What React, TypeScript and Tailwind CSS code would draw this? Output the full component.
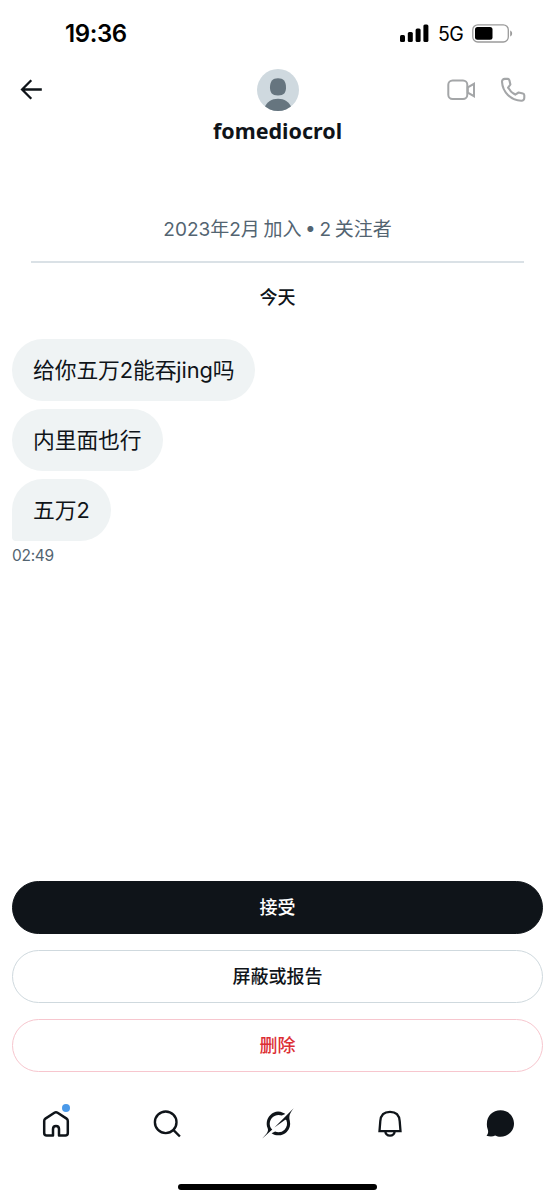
import type { ReactNode } from "react";

const messages = ["给你五万2能吞jing吗", "内里面也行", "五万2"];

function StatusBar() {
  return (
    <div className="flex h-[66px] items-center justify-between pl-[65px] pr-[42px]">
      <span className="pt-[2px] font-['Inter'] text-[24px] leading-[30px] font-semibold tracking-[-0.4px] text-black">19:36</span>
      <div className="flex items-center">
        <svg className="h-[19px] w-[29px]" viewBox="0 0 29 19" fill="#000">
          <rect x="0" y="11" width="5" height="7" rx="1.5" />
          <rect x="7.8" y="8" width="5" height="10" rx="1.5" />
          <rect x="15.6" y="4.5" width="5" height="13.5" rx="1.5" />
          <rect x="23.4" y="0.5" width="5" height="17.5" rx="1.5" />
        </svg>
        <span className="ml-[9px] w-[26px] pt-[2px] font-['Inter'] text-[19.5px] leading-[24px] tracking-[-0.6px] text-black">5G</span>
        <svg className="ml-[8px] h-[19px] w-[41px]" viewBox="0 0 41 19" fill="none">
          <rect x="0.8" y="0.8" width="35.5" height="17.2" rx="5" stroke="#9a9a9a" strokeWidth="1.3" />
          <rect x="3" y="3" width="17.5" height="12.7" rx="2.5" fill="#000" />
          <path d="M38.2 6.5c2.6.8 2.6 5.2 0 6z" fill="#9a9a9a" />
        </svg>
      </div>
    </div>
  );
}

function Avatar() {
  return (
    <svg className="size-[42px] rounded-full" viewBox="0 0 42 42">
      <rect width="42" height="42" fill="#cfd9df" />
      <path d="M13 18.500C13 12.500 15.500 9.300 21 9.300s8 3.200 8 9.200c0 5-2 8-8 8s-8-3-8-8z" fill="#66757f" />
      <path d="M7.500 38.500C10 32.500 14.500 29.700 21 29.700s11 2.800 13.500 8.800V43h-27z" fill="#66757f" />
    </svg>
  );
}

function Header() {
  return (
    <header className="grid h-[80px] grid-cols-3 items-start">
      <svg className="mt-[13px] ml-[20px] h-[21px] w-[22px]" viewBox="0 0 22 21" fill="none" stroke="#0f1419" strokeWidth="2.3">
        <path d="M11.300 1.300 2.100 10.500l9.200 9.200M2.500 10.500h19.300" />
      </svg>
      <div className="flex flex-col items-center pt-[3px]">
        <Avatar />
        <h1 className="mt-[6px] font-['Noto_Sans'] text-[21.500px] leading-[28px] font-bold text-[#0f1419]">fomediocrol</h1>
      </div>
      <div className="flex items-center justify-end gap-[25px] pt-[11px] pr-[29px]">
        <svg className="h-[24px] w-[28px]" viewBox="0 0 28 24" fill="none" stroke="#a4a6a8" strokeWidth="2">
          <rect x="1.300" y="2.500" width="19" height="18.500" rx="4.300" />
          <path d="M20.800 9.300 27 5.800v12.400l-6.200-3.500z" />
        </svg>
        <svg className="size-[26px]" viewBox="0 0 26 26" fill="none" stroke="#a4a6a8" strokeWidth="2.100" strokeLinejoin="round">
          <path d="M4.800 1.900h2.800c1 0 1.600.5 1.800 1.400l1 4.200-2.300 3.200c1.400 1.200 1.900 3 3.400 4.300s2.800 1.700 3.700 2.600l3.400-2.100 4.300 1c.9.200 1.400.8 1.400 1.700v2.600c0 1.900-1.200 3-3 2.900C10.700 23.200 2.600 15.200 2 4.800c-.1-1.800 1-2.900 2.800-2.900z" />
        </svg>
      </div>
    </header>
  );
}

function Bubble({ text, last }: { text: string; last: boolean }) {
  return (
    <div className={`flex h-[62px] w-fit items-center rounded-[31px] bg-[#eff3f4] px-[21px] pt-[1px] text-[21.800px] tracking-[-0.1px] text-[#0f1419] ${last ? "rounded-bl-[4px]" : ""}`}>
      {text}
    </div>
  );
}

function ActionButton({ className, children }: { className: string; children: ReactNode }) {
  return (
    <button className={`h-[53px] w-full rounded-full border text-[18px] font-medium ${className}`}>{children}</button>
  );
}

function TabBar() {
  return (
    <nav className="grid h-[60px] grid-cols-5">
      <div className="flex items-center justify-center">
        <div className="relative">
          <svg className="size-[28px]" viewBox="0 0 28 28" fill="none" stroke="#0f1419" strokeWidth="2.500" strokeLinejoin="round">
            <path d="M11 25.600H4.700c-1.600 0-2.500-.9-2.500-2.500V10.900c0-1 .4-1.800 1.200-2.300l9-5.900c1.100-.7 2.100-.7 3.200 0l9 5.900c.8.500 1.200 1.300 1.200 2.300v12.200c0 1.600-.9 2.500-2.500 2.500H17v-6.700c0-4-6-4-6 0z" />
          </svg>
          <span className="absolute -top-[6px] right-0 size-[8px] rounded-full bg-[#4a99e9]" />
        </div>
      </div>
      <div className="flex items-center justify-center">
        <svg className="size-[28px]" viewBox="0 0 28 28" fill="none" stroke="#0f1419" strokeWidth="2.400">
          <circle cx="12.700" cy="12.300" r="10.800" />
          <path d="m20.300 19.900 6.600 6.600" />
        </svg>
      </div>
      <div className="flex items-center justify-center">
        <svg className="mb-[2px] ml-[2px] h-[32px] w-[33px]" viewBox="1 0 31.500 31.500" fill="#0f1419">
          <path d="m12.748 20.300 10.300-7.600c.5-.37 1.230-.23 1.470.35 1.270 3.050.7 6.730-1.830 9.260s-6.050 3.080-9.270 1.820l-3.500 1.620c5.020 3.430 11.120 2.580 14.930-1.230 3.020-3.020 3.960-7.140 3.080-10.860l.01.010c-1.270-5.460.3-7.650 3.570-12.130L31.700 1.200l-4.260 4.260v-.01L12.745 20.300m-2.120 1.850c-3.600-3.450-2.980-8.780.1-11.860 2.270-2.280 6-3.200 9.250-1.840l3.490-1.610a10.100 10.100 0 0 0-2.360-1.290 11.570 11.570 0 0 0-12.570 2.540c-3.270 3.270-4.300 8.300-2.530 12.600 1.320 3.210-.84 5.480-3.020 7.770-.77.810-1.550 1.620-2.170 2.480l9.810-8.780" />
        </svg>
      </div>
      <div className="flex items-center justify-center">
        <svg className="ml-[2px] size-[28px]" viewBox="0 0 28 28" fill="none" stroke="#0f1419" strokeWidth="2.300">
          <path d="M4.300 11.200C4.700 5.300 8.400 1.900 14 1.900s9.300 3.400 9.700 9.300l.8 10H3.500z" />
          <path d="M9.200 21.200c.4 3 2 4.500 4.800 4.500s4.400-1.500 4.800-4.500" />
        </svg>
      </div>
      <div className="flex items-center justify-center">
        <svg className="size-[28px]" viewBox="0 0 28 28" fill="#0f1419">
          <path d="M14.500.3C22.300.3 28 6 28 13.600s-6 13.200-13.600 13.200c-1.900 0-3.600-.4-5.200-1.300-2.300 1.100-5 1.200-8.700.3 1.800-2.200 2-4.200 1.200-6.600A13 13 0 0 1 .9 13.600C.9 6 6.700.3 14.500.3z" />
        </svg>
      </div>
    </nav>
  );
}

export default function App() {
  return (
    <div className="flex h-[1200px] w-full flex-col bg-white font-['Inter','Noto_Sans_CJK_SC',sans-serif]">
      <StatusBar />
      <Header />
      <main className="flex-1">
        <div className="mx-[31px] flex h-[117px] items-end justify-center border-b-2 border-[#dae1e6] pb-[17px] text-[19px] leading-[28px] [word-spacing:-1.7px] text-[#536471]">
          2023年2月 加入 • 2 关注者
        </div>
        <p className="mt-[21px] text-center text-[18px] leading-[28px] font-medium text-[#0f1419]">今天</p>
        <div className="mt-[27px] flex flex-col gap-[8px] pl-[12px]">
          {messages.map((text, i) => (
            <Bubble key={text} text={text} last={i === messages.length - 1} />
          ))}
        </div>
        <p className="mt-[4px] ml-[12px] text-[15.500px] leading-[22px] tracking-[-0.3px] text-[#536471]">02:49</p>
      </main>
      <div className="flex flex-col gap-[16px] px-[12px] pb-[22px]">
        <ActionButton className="border-[#0f1419] bg-[#0f1419] text-white">接受</ActionButton>
        <ActionButton className="border-[#cfd9de] text-[#0f1419]">屏蔽或报告</ActionButton>
        <ActionButton className="border-[#f7c6ce] text-[#dc2e34]">删除</ActionButton>
      </div>
      <TabBar />
      {/* Home indicator */}
      <div className="flex h-[46px] items-end justify-center pb-[10px]">
        <div className="h-[6px] w-[199px] rounded-full bg-black" />
      </div>
    </div>
  );
}
